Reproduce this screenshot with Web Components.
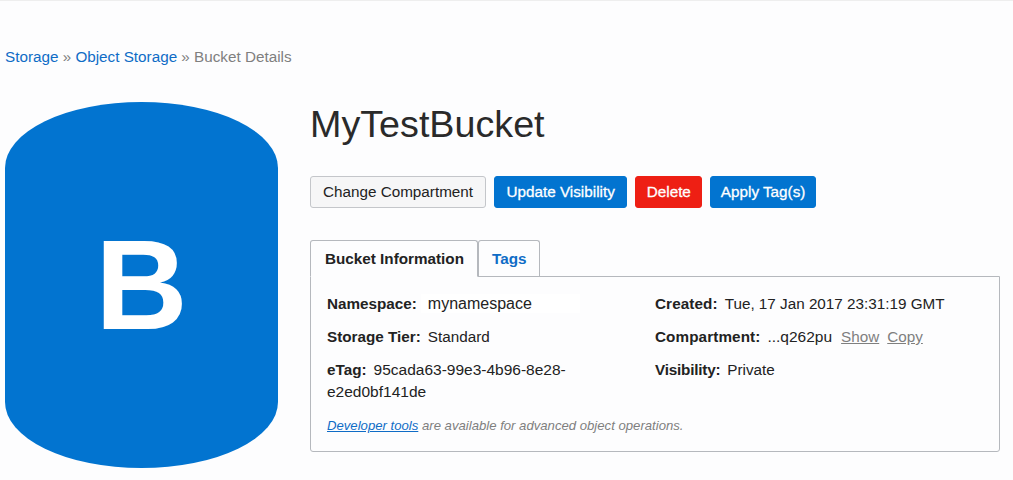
<!DOCTYPE html>
<html>
<head>
<meta charset="utf-8">
<style>
    html, body { margin: 0; height: 100%; }
    body {
        background: #fdfdfe;
        color: #222;
        font-family: "Liberation Sans", Arial, sans-serif;
        font-size: 15.25px;
        overflow: hidden;
    }
</style>
</head>
<body>
<template id="page-template">
    <style>
        :host {
            display: block;
            height: 480px;
            box-sizing: border-box;
            border-top: 1px solid #eeeeee;
            padding: 47px 13px 0 5px;
        }
        .body {
            display: flex;
            gap: 32px;
            margin-top: 36px;
        }
        .main { flex: 1; min-width: 0; }
    </style>
    <slot name="crumbs"></slot>
    <div class="body">
        <slot name="icon"></slot>
        <div class="main"><slot></slot></div>
    </div>
</template>

<template id="crumbs-template">
    <style>
        :host { display: block; line-height: 18px; color: #7f7f7f; }
        ::slotted(a) { color: #0f6cc6; text-decoration: none; }
    </style>
    <slot></slot>
</template>

<template id="bucket-icon-template">
    <style>
        :host {
            display: flex;
            align-items: center;
            justify-content: center;
            flex: none;
            width: 273px;
            height: 366px;
            border-radius: 50% / 18%;
            background: #0274d0;
            color: #fff;
            font-weight: bold;
            font-size: 128px;
            line-height: 1;
        }
    </style>
    <slot></slot>
</template>

<template id="button-template">
    <style>
        :host { display: block; }
        button {
            display: block;
            box-sizing: border-box;
            height: 32px;
            padding: 0 var(--pad, 11px) 2px;
            border: 1px solid #0274d0;
            border-radius: 3px;
            background: #0274d0;
            color: #fff;
            font: inherit;
            -webkit-text-stroke: 0.3px #fff;
        }
        :host([kind="plain"]) button {
            background: #f6f6f7;
            border-color: #c4c6ca;
            color: #222;
            -webkit-text-stroke: 0;
        }
        :host([kind="danger"]) button {
            background: #ee1f14;
            border-color: #ee1f14;
        }
    </style>
    <button type="button"><slot></slot></button>
</template>

<template id="tabs-template">
    <style>
        :host { display: block; margin-top: 32px; }
        .strip { display: flex; height: 36px; }
        .tab {
            box-sizing: border-box;
            height: 37px;
            padding: 0 14px;
            border: 1px solid #b5b8bd;
            border-radius: 3px 3px 0 0;
            display: flex;
            align-items: center;
            font-weight: bold;
            color: #0f6cc6;
            position: relative;
            z-index: 1;
        }
        .tab.active { color: #222; background: #fdfdfe; border-bottom-color: #fdfdfe; padding-right: 13px; }
        .tab:not(.active) { height: 36px; border-bottom: 0; padding: 0 13px; }
        .panel {
            box-sizing: border-box;
            height: 176px;
            border: 1px solid #b5b8bd;
            border-radius: 0 0 3px 3px;
            padding: 16px;
        }
    </style>
    <div class="strip">
        <div class="tab active">Bucket Information</div>
        <div class="tab">Tags</div>
    </div>
    <div class="panel"><slot></slot></div>
</template>

<template id="field-template">
    <style>
        :host { display: block; line-height: 22px; }
        .name { font-weight: bold; margin-right: 7px; }
        ::slotted(.patch) {
            display: inline-block;
            box-sizing: border-box;
            width: 159px;
            margin-left: -3px;
            padding-left: 7px;
            background: #fff;
            font-size: 16px;
            line-height: 19px;
        }
        ::slotted(a) { color: #7f7f7f; margin-left: 8px; }
    </style>
    <span class="name"><slot name="name"></slot></span><slot></slot>
</template>

<bucket-page>
    <bucket-crumbs slot="crumbs"><a href="#">Storage</a> » <a href="#">Object Storage</a> » Bucket Details</bucket-crumbs>
    <bucket-icon slot="icon">B</bucket-icon>
    <bucket-title>MyTestBucket</bucket-title>
    <bucket-actions>
        <bucket-button kind="plain" style="--pad:12px">Change Compartment</bucket-button>
        <bucket-button style="--pad:11.5px">Update Visibility</bucket-button>
        <bucket-button kind="danger" style="--pad:10.5px">Delete</bucket-button>
        <bucket-button style="--pad:9.5px">Apply Tag(s)</bucket-button>
    </bucket-actions>
    <bucket-tabs>
        <bucket-info>
            <bucket-field><span slot="name">Namespace:</span><span class="patch">mynamespace</span></bucket-field>
            <bucket-field><span slot="name" style="letter-spacing:.1px">Created:</span>Tue, 17 Jan 2017 23:31:19 GMT</bucket-field>
            <bucket-field><span slot="name">Storage Tier:</span>Standard</bucket-field>
            <bucket-field><span slot="name" style="letter-spacing:.1px">Compartment:</span><span style="font-size:15.5px;margin-right:1px">...q262pu</span><a href="#">Show</a><a href="#">Copy</a></bucket-field>
            <bucket-field style="font-size:15.5px"><span slot="name" style="font-size:15.25px">eTag:</span><span>95cada63-99e3-4b96-8e28-</span><br><span>e2ed0bf141de</span></bucket-field>
            <bucket-field><span slot="name" style="letter-spacing:-.2px">Visibility:</span>Private</bucket-field>
            <bucket-note slot="note"><a href="#" style="color:#0f6cc6">Developer tools</a> are available for advanced object operations.</bucket-note>
        </bucket-info>
    </bucket-tabs>
</bucket-page>

<script>
    // components that only need their template cloned into a shadow root
    class TemplateElement extends HTMLElement {
        constructor(templateId) {
            super();
            this.attachShadow({ mode: 'open' });
            const template = document.getElementById(templateId);
            this.shadowRoot.appendChild(template.content.cloneNode(true));
        }
    }

    class BucketPage extends TemplateElement {
        constructor() { super('page-template'); }
    }
    class BucketCrumbs extends TemplateElement {
        constructor() { super('crumbs-template'); }
    }
    class BucketIcon extends TemplateElement {
        constructor() { super('bucket-icon-template'); }
    }
    class BucketButton extends TemplateElement {
        constructor() { super('button-template'); }
    }
    class BucketTabs extends TemplateElement {
        constructor() { super('tabs-template'); }
    }
    class BucketField extends TemplateElement {
        constructor() { super('field-template'); }
    }

    class BucketTitle extends HTMLElement {
        constructor() {
            super();
            this.attachShadow({ mode: 'open' });
            this.shadowRoot.innerHTML = `
                <style>
                    :host { display: block; font-size: 37.7px; line-height: 44px; color: #2a2a2a; }
                </style>
                <slot></slot>`;
        }
    }

    class BucketActions extends HTMLElement {
        constructor() {
            super();
            this.attachShadow({ mode: 'open' });
            this.shadowRoot.innerHTML = `
                <style>
                    :host { display: flex; gap: 8px; margin-top: 30px; }
                </style>
                <slot></slot>`;
        }
    }

    class BucketInfo extends HTMLElement {
        constructor() {
            super();
            this.attachShadow({ mode: 'open' });
            this.shadowRoot.innerHTML = `
                <style>
                    :host {
                        display: grid;
                        grid-template-columns: 328px 1fr;
                        row-gap: 11px;
                    }
                    .note { grid-column: 1 / -1; margin-top: 4px; font-size: 13.15px; font-style: italic; color: #7f7f7f; }
                    ::slotted(bucket-note) { display: block; }
                </style>
                <slot></slot>
                <div class="note"><slot name="note"></slot></div>`;
        }
    }

    customElements.define('bucket-page', BucketPage);
    customElements.define('bucket-crumbs', BucketCrumbs);
    customElements.define('bucket-icon', BucketIcon);
    customElements.define('bucket-button', BucketButton);
    customElements.define('bucket-tabs', BucketTabs);
    customElements.define('bucket-field', BucketField);
    customElements.define('bucket-title', BucketTitle);
    customElements.define('bucket-actions', BucketActions);
    customElements.define('bucket-info', BucketInfo);
</script>
</body>
</html>
